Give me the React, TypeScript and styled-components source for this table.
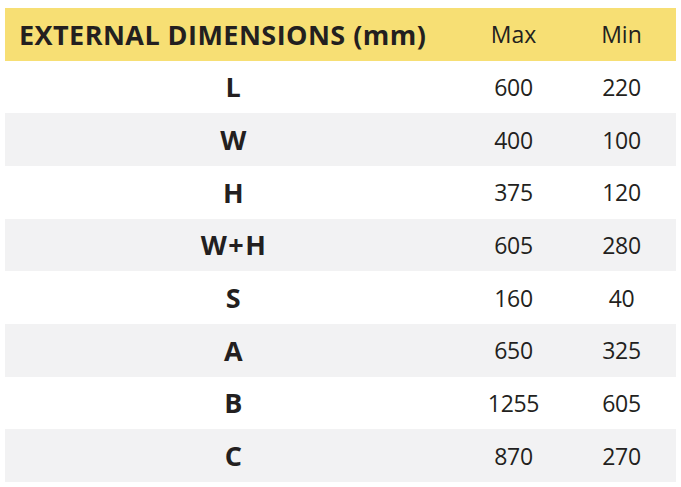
import React from 'react';
import styled, { createGlobalStyle } from 'styled-components';

const GlobalStyle = createGlobalStyle`
  html, body {
    margin: 0;
    padding: 0;
    background: #ffffff;
  }
  body {
    font-family: 'Open Sans', 'Noto Sans', sans-serif;
    color: #231f20;
  }
`;

type Row = { label: string; max: string; min: string };

const ROWS: Row[] = [
  { label: 'L', max: '600', min: '220' },
  { label: 'W', max: '400', min: '100' },
  { label: 'H', max: '375', min: '120' },
  { label: 'W+H', max: '605', min: '280' },
  { label: 'S', max: '160', min: '40' },
  { label: 'A', max: '650', min: '325' },
  { label: 'B', max: '1255', min: '605' },
  { label: 'C', max: '870', min: '270' },
];

const Page = styled.div`
  padding: 8px 5px 0 5px;
`;

const Table = styled.div`
  display: grid;
  grid-template-columns: 455px 107px 109px;
  grid-auto-rows: 52.67px;
  width: 671px;
`;

const HeadCell = styled.div<{ $first?: boolean }>`
  display: flex;
  align-items: center;
  justify-content: ${(p) => (p.$first ? 'flex-start' : 'center')};
  padding-left: ${(p) => (p.$first ? '14px' : '0')};
  background: #f7df74;
  font-size: ${(p) => (p.$first ? '27px' : '23px')};
  font-weight: ${(p) => (p.$first ? 700 : 400)};
  letter-spacing: ${(p) => (p.$first ? '0.45px' : '0')};
  white-space: nowrap;
`;

const Cell = styled.div<{ $shade: boolean; $label?: boolean }>`
  display: flex;
  align-items: center;
  justify-content: center;
  padding-left: ${(p) => (p.$label ? '3px' : '0')};
  background: ${(p) => (p.$shade ? '#f2f2f3' : '#ffffff')};
  font-size: ${(p) => (p.$label ? '27px' : '23px')};
  font-weight: ${(p) => (p.$label ? 700 : 400)};
  letter-spacing: ${(p) => (p.$label ? '1.5px' : '-0.3px')};
`;

export default function App() {
  return (
    <Page>
      <GlobalStyle />
      <Table>
        <HeadCell $first>EXTERNAL DIMENSIONS (mm)</HeadCell>
        <HeadCell>Max</HeadCell>
        <HeadCell>Min</HeadCell>
        {ROWS.map((r, i) => (
          <React.Fragment key={r.label}>
            <Cell $shade={i % 2 === 1} $label>{r.label}</Cell>
            <Cell $shade={i % 2 === 1}>{r.max}</Cell>
            <Cell $shade={i % 2 === 1}>{r.min}</Cell>
          </React.Fragment>
        ))}
      </Table>
    </Page>
  );
}
